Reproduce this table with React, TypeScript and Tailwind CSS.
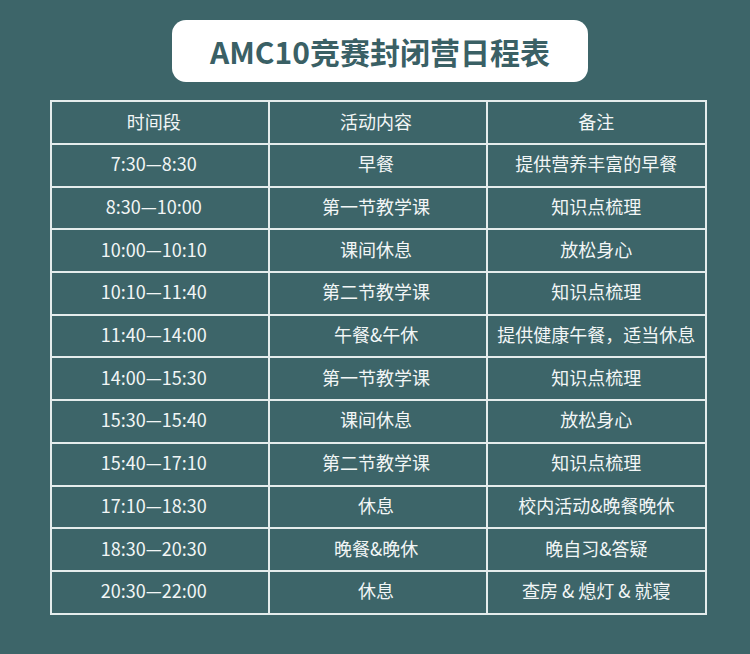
const rows: [string, string, string][] = [
  ["7:30—8:30", "早餐", "提供营养丰富的早餐"],
  ["8:30—10:00", "第一节教学课", "知识点梳理"],
  ["10:00—10:10", "课间休息", "放松身心"],
  ["10:10—11:40", "第二节教学课", "知识点梳理"],
  ["11:40—14:00", "午餐&午休", "提供健康午餐，适当休息"],
  ["14:00—15:30", "第一节教学课", "知识点梳理"],
  ["15:30—15:40", "课间休息", "放松身心"],
  ["15:40—17:10", "第二节教学课", "知识点梳理"],
  ["17:10—18:30", "休息", "校内活动&晚餐晚休"],
  ["18:30—20:30", "晚餐&晚休", "晚自习&答疑"],
  ["20:30—22:00", "休息", "查房 & 熄灯 & 就寝"],
]

export default function App() {
  return (
    <div
      className="w-[750px] h-[654px] bg-[#3d6569] flex flex-col items-center pt-5"
      style={{ fontFamily: '"Noto Sans CJK SC", "Noto Sans", sans-serif' }}
    >
      <div className="ml-[10px] w-[416px] h-[62px] bg-white rounded-[14px] flex items-center justify-center">
        <h1 className="text-[30px] font-bold text-[#3a6065]">AMC10竞赛封闭营日程表</h1>
      </div>

      <table className="ml-[6px] mt-[18px] w-[657px] border-collapse text-[#f2f6f6] text-[18px]">
        <thead>
          <tr className="h-[43px]">
            <th className="w-[219px] border-2 border-[#e4ecec] font-normal p-0 pr-3 pb-[3px]">时间段</th>
            <th className="w-[219px] border-2 border-[#e4ecec] font-normal p-0 pr-1 pb-[3px]">活动内容</th>
            <th className="w-[219px] border-2 border-[#e4ecec] font-normal p-0 pb-[3px]">备注</th>
          </tr>
        </thead>
        <tbody>
          {rows.map((r) => (
            <tr key={r[0]} className="h-[42.7px]">
              <td className="border-2 border-[#e4ecec] text-center p-0 pr-3 pb-[3px]">{r[0]}</td>
              <td className="border-2 border-[#e4ecec] text-center p-0 pr-1 pb-[3px]">{r[1]}</td>
              <td className="border-2 border-[#e4ecec] text-center p-0 pb-[3px]">{r[2]}</td>
            </tr>
          ))}
        </tbody>
      </table>
    </div>
  )
}
